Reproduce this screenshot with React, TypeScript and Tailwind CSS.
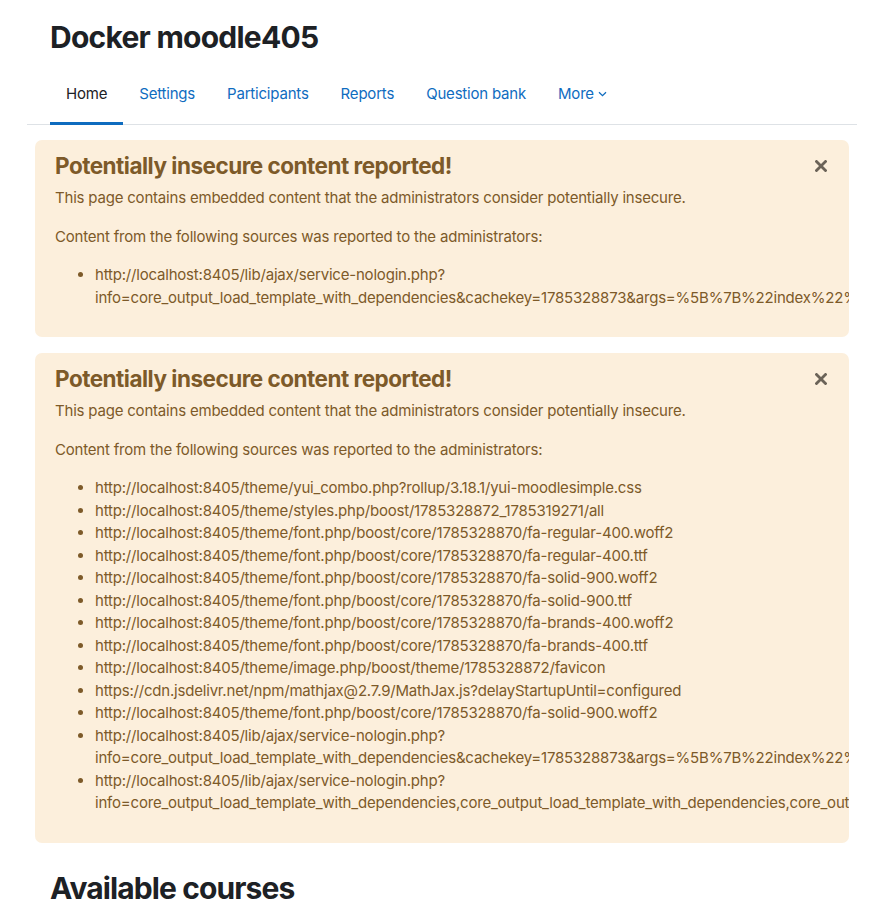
import React from "react";

const navItems = ["Home", "Settings", "Participants", "Reports", "Question bank"];

type Source = { first: string; rest?: string };

const firstSources: Source[] = [
  {
    first: "http://localhost:8405/lib/ajax/service-nologin.php?",
    rest: "info=core_output_load_template_with_dependencies&cachekey=1785328873&args=%5B%7B%22index%22%3A0%2C%22methodname%22%3A%22core_output_load_template_with_dependencies%22%2C%22args%22%3A%7B%22component%22%3A%22core%22%7D%7D%5D",
  },
];

const secondSources: Source[] = [
  { first: "http://localhost:8405/theme/yui_combo.php?rollup/3.18.1/yui-moodlesimple.css" },
  { first: "http://localhost:8405/theme/styles.php/boost/1785328872_1785319271/all" },
  { first: "http://localhost:8405/theme/font.php/boost/core/1785328870/fa-regular-400.woff2" },
  { first: "http://localhost:8405/theme/font.php/boost/core/1785328870/fa-regular-400.ttf" },
  { first: "http://localhost:8405/theme/font.php/boost/core/1785328870/fa-solid-900.woff2" },
  { first: "http://localhost:8405/theme/font.php/boost/core/1785328870/fa-solid-900.ttf" },
  { first: "http://localhost:8405/theme/font.php/boost/core/1785328870/fa-brands-400.woff2" },
  { first: "http://localhost:8405/theme/font.php/boost/core/1785328870/fa-brands-400.ttf" },
  { first: "http://localhost:8405/theme/image.php/boost/theme/1785328872/favicon" },
  { first: "https://cdn.jsdelivr.net/npm/mathjax@2.7.9/MathJax.js?delayStartupUntil=configured" },
  { first: "http://localhost:8405/theme/font.php/boost/core/1785328870/fa-solid-900.woff2" },
  {
    first: "http://localhost:8405/lib/ajax/service-nologin.php?",
    rest: "info=core_output_load_template_with_dependencies&cachekey=1785328873&args=%5B%7B%22index%22%3A0%2C%22methodname%22%3A%22core_output_load_template_with_dependencies%22%7D%5D",
  },
  {
    first: "http://localhost:8405/lib/ajax/service-nologin.php?",
    rest: "info=core_output_load_template_with_dependencies,core_output_load_template_with_dependencies,core_output_load_template_with_dependencies&cachekey=1785328873",
  },
];

function CloseIcon() {
  return (
    <svg width="12" height="12" viewBox="0 0 12 12" aria-hidden="true">
      <path d="M1.5 1.5 L10.5 10.5 M10.5 1.5 L1.5 10.5" stroke="#6b6358" strokeWidth="2.8" strokeLinecap="square" />
    </svg>
  );
}

function InsecureAlert({ sources }: { sources: Source[] }) {
  return (
    <div className="relative mx-[8px] overflow-hidden rounded-[7px] bg-[#fcefdc] px-[20px] pt-[12px] pb-[12px] text-[#7d5a29]">
      <button className="absolute right-[22px] top-[20px] flex h-3 w-3 items-center justify-center" aria-label="Close">
        <CloseIcon />
      </button>
      <h4 className="mb-[8px] text-[22.5px] font-bold leading-[1.2] tracking-[-0.5px]">Potentially insecure content reported!</h4>
      <p className="mb-[16px]">This page contains embedded content that the administrators consider potentially insecure.</p>
      <p className="mb-[16px]">Content from the following sources was reported to the administrators:</p>
      <ul className="mb-[16px] list-disc pl-[40px]">
        {sources.map((s, i) => (
          <li key={i} className="whitespace-nowrap">
            {s.first}
            {s.rest && (
              <>
                <br />
                {s.rest}
              </>
            )}
          </li>
        ))}
      </ul>
    </div>
  );
}

export default function App() {
  return (
    <div className="min-h-screen bg-white font-['Inter','Liberation_Sans',sans-serif] text-[15px] leading-[1.5] tracking-[-0.2px] text-[#1d2125]">
      <div className="pl-[27px] pr-[29px]">
        <h1 className="ml-[23px] pt-[19px] text-[30px] font-bold leading-[36px] tracking-[-0.75px] text-[#1d2125]">
          Docker moodle405
        </h1>
        <nav className="mt-[11px] flex shadow-[inset_0_-1px_0_#dee2e6]">
          <ul className="ml-[23px] flex">
            {navItems.map((item, i) => (
              <li key={item}>
                <a
                  href="#"
                  className={
                    i === 0
                      ? "flex h-[59px] items-center border-b-[3px] border-[#0f6cbf] px-[16px] text-[#1d2125]"
                      : "flex h-[59px] items-center border-b-[3px] border-transparent px-[16px] text-[#0f6cbf]"
                  }
                >
                  {item}
                </a>
              </li>
            ))}
            <li>
              <a href="#" className="flex h-[59px] items-center gap-[4px] border-b-[3px] border-transparent px-[16px] text-[#0f6cbf]">
                More
                <svg width="9" height="6" viewBox="0 0 9 6" aria-hidden="true">
                  <path d="M1 1.2 L4.5 4.6 L8 1.2" fill="none" stroke="#0f6cbf" strokeWidth="1.3" />
                </svg>
              </a>
            </li>
          </ul>
        </nav>

        <div className="mt-[15px] flex flex-col gap-[16px]">
          <InsecureAlert sources={firstSources} />
          <InsecureAlert sources={secondSources} />
        </div>

        <h2 className="ml-[23px] mt-[27px] text-[30px] font-bold leading-[36px] tracking-[-0.9px] text-[#1d2125]">
          Available courses
        </h2>
      </div>
    </div>
  );
}
